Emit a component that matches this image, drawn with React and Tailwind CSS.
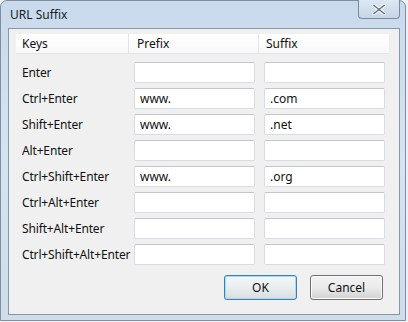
import React from "react";

const rows = [
  ["Enter", "", ""],
  ["Ctrl+Enter", "www.", ".com"],
  ["Shift+Enter", "www.", ".net"],
  ["Alt+Enter", "", ""],
  ["Ctrl+Shift+Enter", "www.", ".org"],
  ["Ctrl+Alt+Enter", "", ""],
  ["Shift+Alt+Enter", "", ""],
  ["Ctrl+Shift+Alt+Enter", "", ""],
];

function Field({ value }) {
  return (
    <div className="w-[121px] h-[21px] bg-white border border-[#d9dde2] border-t-[#c3c6ca] rounded-[2px] flex items-center pl-[5px] text-[12px] text-[#111]">
      {value}
    </div>
  );
}

export default function App() {
  return (
    <div
      className="w-[408px] h-[322px] overflow-hidden bg-[#f0f0f0]"
      style={{ fontFamily: '"Noto Sans", "Open Sans", sans-serif' }}
    >
      <div className="relative w-[406px] h-[321px] rounded-t-[7px] border border-[#7e8fa3] bg-gradient-to-b from-[#c9daec] via-[#d6e3f1] to-[#cfdcea] flex flex-col">
        <div className="h-[27px] flex items-center pl-[9px] text-[12px] text-[#1b1b1b]">URL Suffix</div>
        <div className="absolute top-[-1px] right-[5px] w-[42px] h-[19px] rounded-b-[4px] border border-[#7c8a9c] border-t-0 bg-gradient-to-b from-[#dde8f3] to-[#c6d6e8] flex items-center justify-center">
          <svg width="14" height="11" viewBox="0 0 14 11">
            <path d="M2 1.5 L12 9.5 M12 1.5 L2 9.5" stroke="#ffffff" strokeWidth="3.2" strokeLinecap="square" />
            <path d="M2 1.5 L12 9.5 M12 1.5 L2 9.5" stroke="#5d6b7c" strokeWidth="1.4" strokeLinecap="square" />
          </svg>
        </div>
        <div className="ml-[7px] mr-[5px] h-[287px] border border-[#8797ab] bg-[#f0f0f0] flex flex-col pt-[5px] pl-[7px] pr-[15px]">
          <div className="w-[373px] h-[20px] bg-gradient-to-b from-[#ffffff] to-[#f7f8f9] border-b border-[#e3e5e8] grid grid-cols-[113px_130px_130px] text-[12px] text-[#111]">
            <div className="pl-[6px] flex items-center border-r border-[#e3e5e8]">Keys</div>
            <div className="pl-[8px] flex items-center border-r border-[#e3e5e8]">Prefix</div>
            <div className="pl-[7px] flex items-center">Suffix</div>
          </div>
          <div className="mt-[8px] flex flex-col gap-[5px]">
            {rows.map(([k, p, s]) => (
              <div key={k} className="grid grid-cols-[113px_130px_130px] h-[21px] text-[12px] text-[#111]">
                <div className="pl-[6px] flex items-center whitespace-nowrap tracking-[-0.15px]">{k}</div>
                <div className="pl-[5px]"><Field value={p} /></div>
                <div className="pl-[5px]"><Field value={s} /></div>
              </div>
            ))}
          </div>
          <div className="mt-[10px] flex justify-end gap-[13px] pr-[1px]">
            <button className="w-[73px] h-[25px] rounded-[3px] border border-[#3c7fb1] bg-gradient-to-b from-[#f4f7f9] via-[#e9eef1] to-[#d8dde0] shadow-[inset_0_0_0_1px_#a9dcf4] text-[12px] text-[#111]">OK</button>
            <button className="w-[73px] h-[25px] rounded-[3px] border border-[#707070] bg-gradient-to-b from-[#f2f2f2] via-[#ebebeb] to-[#d2d2d2] shadow-[inset_0_0_0_1px_#fafafa] text-[12px] text-[#111]">Cancel</button>
          </div>
        </div>
      </div>
    </div>
  );
}
